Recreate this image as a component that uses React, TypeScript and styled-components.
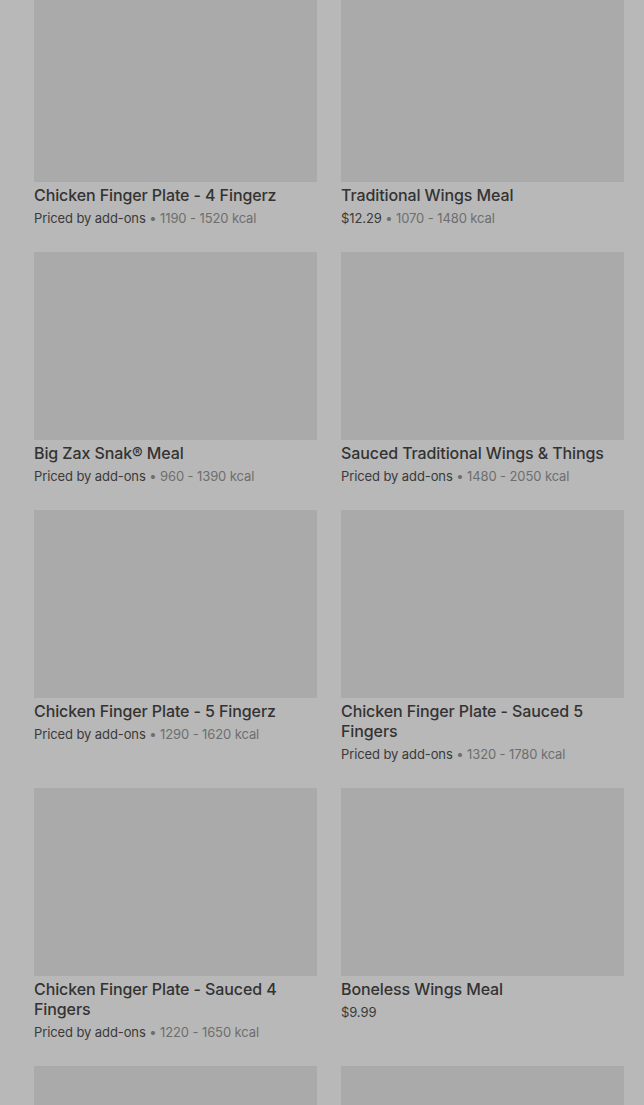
import React from "react";
import styled, { createGlobalStyle } from "styled-components";

const Global = createGlobalStyle`
  html, body { margin: 0; padding: 0; background: #b8b8b8; }
  body { font-family: Inter, "Noto Sans", "Liberation Sans", sans-serif; overflow: hidden; }
`;

const Page = styled.div`
  background: #b8b8b8;
  height: 1105px;
  overflow: hidden;
  padding: 0 20px 0 34px;
`;

const Grid = styled.ul`
  list-style: none;
  margin: -6px 0 0;
  padding: 0;
  display: grid;
  grid-template-columns: 283px 283px;
  column-gap: 24px;
  row-gap: 25px;
  align-items: start;
`;

const Card = styled.li`
  display: flex;
  flex-direction: column;
`;

const Thumb = styled.div`
  height: 188px;
  background: #aaaaaa;
`;

const Title = styled.div`
  margin-top: 3px;
  font-size: 16px;
  line-height: 20px;
  font-weight: 500;
  color: #333333;
  letter-spacing: -0.1px;
`;

const Meta = styled.div`
  margin-top: 4px;
  font-size: 13px;
  line-height: 18px;
  color: #3a3a3a;
  letter-spacing: -0.1px;
`;

const Muted = styled.span`
  color: #6e6e6e;
`;

type Item = { title?: string; price?: string; kcal?: string };

const items: Item[] = [
  { title: "Chicken Finger Plate - 4 Fingerz", price: "Priced by add-ons", kcal: "1190 - 1520 kcal" },
  { title: "Traditional Wings Meal", price: "$12.29", kcal: "1070 - 1480 kcal" },
  { title: "Big Zax Snak® Meal", price: "Priced by add-ons", kcal: "960 - 1390 kcal" },
  { title: "Sauced Traditional Wings & Things", price: "Priced by add-ons", kcal: "1480 - 2050 kcal" },
  { title: "Chicken Finger Plate - 5 Fingerz", price: "Priced by add-ons", kcal: "1290 - 1620 kcal" },
  { title: "Chicken Finger Plate - Sauced 5 Fingers", price: "Priced by add-ons", kcal: "1320 - 1780 kcal" },
  { title: "Chicken Finger Plate - Sauced 4 Fingers", price: "Priced by add-ons", kcal: "1220 - 1650 kcal" },
  { title: "Boneless Wings Meal", price: "$9.99" },
  {},
  {},
];

export default function App() {
  return (
    <Page>
      <Global />
      <Grid>
        {items.map((it, i) => (
          <Card key={i}>
            <Thumb />
            {it.title && <Title>{it.title}</Title>}
            {it.price && (
              <Meta>
                {it.price}
                {it.kcal && <Muted> • {it.kcal}</Muted>}
              </Meta>
            )}
          </Card>
        ))}
      </Grid>
    </Page>
  );
}
